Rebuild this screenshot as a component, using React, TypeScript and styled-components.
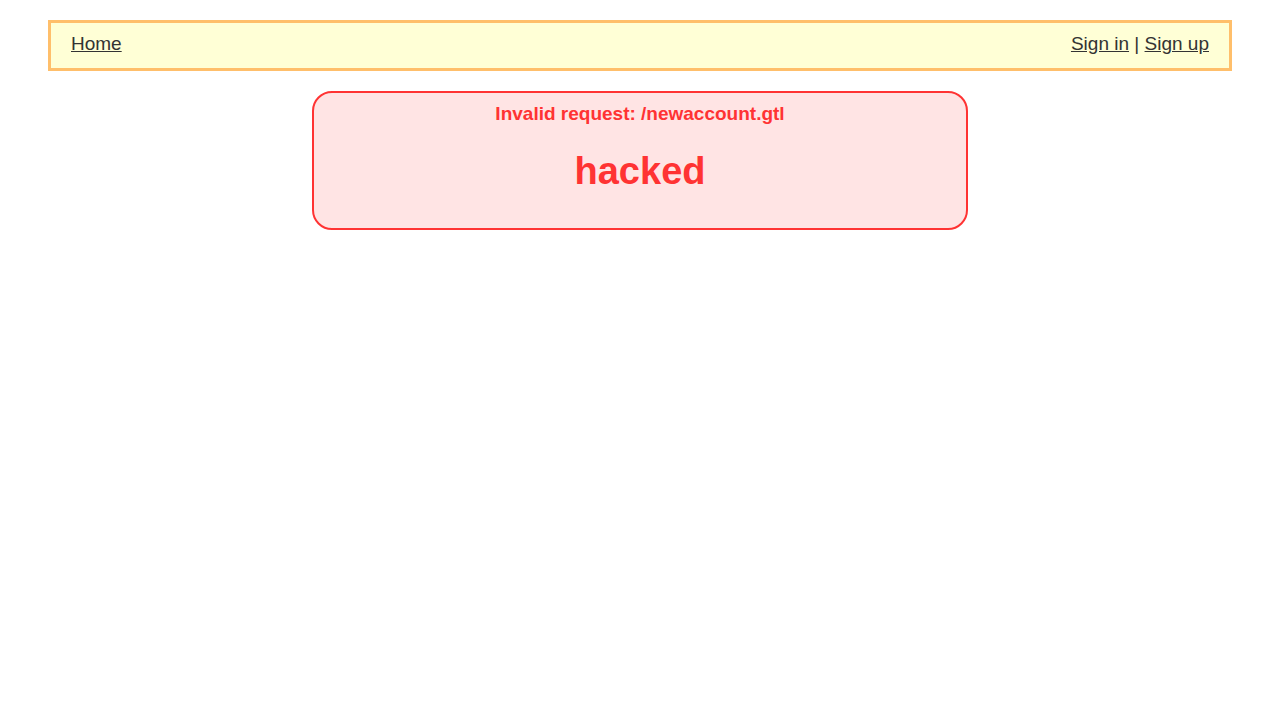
import React from "react";
import styled, { createGlobalStyle } from "styled-components";

const GlobalStyle = createGlobalStyle`
  body {
    margin: 0;
    background: #ffffff;
    color: #333333;
    font-family: "Liberation Sans", Helvetica, Arial, sans-serif;
    font-size: 19px;
    line-height: 22px;
  }
`;

const Page = styled.div`
  padding: 20px 48px;
`;

const MenuBar = styled.nav`
  display: flex;
  justify-content: space-between;
  padding: 10px 20px 13px;
  border: 3px solid #ffbf6b;
  background: #ffffd6;
`;

const MenuLink = styled.a`
  color: #333333;
  text-decoration: underline;
`;

const Message = styled.main`
  box-sizing: border-box;
  max-width: 656px;
  margin: 20px auto 0;
  padding: 10px 20px 35px;
  border: 2px solid #ff3333;
  border-radius: 20px;
  background: #ffe4e4;
  color: #ff3333;
  font-weight: bold;
  text-align: center;
`;

const Headline = styled.h1`
  margin: 24px 0 0;
  font-size: 38px;
  line-height: 44px;
`;

export default function App() {
  return (
    <>
      <GlobalStyle />
      <Page>
        <MenuBar>
          <MenuLink href="#home">Home</MenuLink>
          <span>
            <MenuLink href="#signin">Sign in</MenuLink> |{" "}
            <MenuLink href="#signup">Sign up</MenuLink>
          </span>
        </MenuBar>
        <Message>
          Invalid request: /newaccount.gtl
          <Headline>hacked</Headline>
        </Message>
      </Page>
    </>
  );
}
